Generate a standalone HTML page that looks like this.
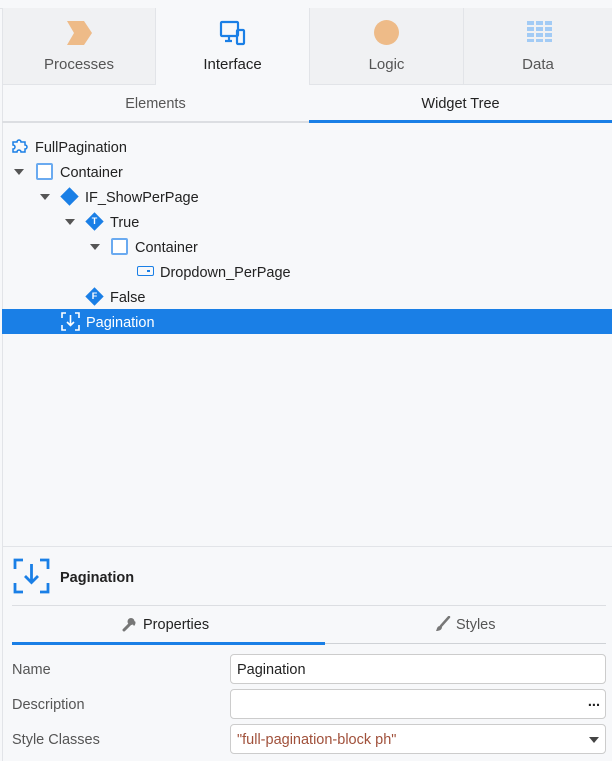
<!DOCTYPE html>
<html><head><style>
*{box-sizing:border-box;margin:0;padding:0}
body{width:612px;height:761px;background:#f7f8fa;font-family:"Liberation Sans","DejaVu Sans",sans-serif;position:relative;overflow:hidden;color:#222}
.a{position:absolute}
.tab{position:absolute;top:8px;height:76px;background:#f0f1f3;border-left:1px solid #e2e4e8;font-size:15px;color:#555;text-align:center}
.tab span{position:absolute;left:0;right:0;top:48px}
.row{position:absolute;height:25px;line-height:25px;font-size:14.5px;color:#222}
.row span{top:2px}
.tri{position:absolute;width:0;height:0;border-left:5px solid transparent;border-right:5px solid transparent;border-top:6px solid #555}
.sq{position:absolute;width:17px;height:17px;border:2px solid #6aaaf0;border-radius:2px;background:#fff}
.dia{position:absolute;width:13px;height:13px;background:#1a7fe6;transform:rotate(45deg)}
.lbl{position:absolute;font-size:14.5px;color:#555}
.inp{position:absolute;left:230px;width:376px;height:30px;background:#fff;border:1px solid #ccc;border-radius:4px;font-size:14.5px;line-height:30px;padding-left:6px}
</style></head><body>
<div class="a" style="left:0;top:8px;width:612px;height:1px;background:#e2e4e8"></div>
<div class="a" style="left:2px;top:8px;width:1px;height:753px;background:#e2e4e8"></div>
<div class="tab" style="left:2px;width:153px"><svg class="a" style="left:64px;top:13px" width="26" height="24"><polygon points="0,0 17,0 25,12 17,24 0,24 7,12" fill="#eebb88"/></svg><span>Processes</span></div>
<div class="tab" style="left:155px;width:154px;background:#f7f8fa;color:#222;height:77px"><svg class="a" style="left:63px;top:12px" width="28" height="26" fill="none" stroke="#1a7fe6" stroke-width="2.2"><rect x="2" y="2" width="17" height="14" rx="1"/><path d="M10 16v5M6 21h7"/><rect x="18" y="10" width="7" height="14" rx="1"/></svg><span>Interface</span></div>
<div class="tab" style="left:309px;width:154px"><div class="a" style="left:64px;top:12px;width:25px;height:25px;border-radius:50%;background:#eebb88"></div><span>Logic</span></div>
<div class="tab" style="left:463px;width:149px"><svg class="a" style="left:63px;top:13px" width="26" height="22" fill="#a2cbf5"><rect x="0" y="0" width="7" height="4"/><rect x="9" y="0" width="7" height="4"/><rect x="18" y="0" width="7" height="4"/><rect x="0" y="6" width="7" height="4"/><rect x="9" y="6" width="7" height="4"/><rect x="18" y="6" width="7" height="4"/><rect x="0" y="12" width="7" height="4"/><rect x="9" y="12" width="7" height="4"/><rect x="18" y="12" width="7" height="4"/><rect x="0" y="18" width="7" height="3"/><rect x="9" y="18" width="7" height="3"/><rect x="18" y="18" width="7" height="3"/></svg><span>Data</span></div>
<div class="a" style="left:2px;top:84px;width:153px;height:1px;background:#e2e4e8"></div>
<div class="a" style="left:309px;top:84px;width:303px;height:1px;background:#e2e4e8"></div>
<div class="a" style="left:2px;top:96px;width:307px;text-align:center;font-size:14.5px;color:#555">Elements</div>
<div class="a" style="left:309px;top:96px;width:303px;text-align:center;font-size:14.5px;color:#222">Widget Tree</div>
<div class="a" style="left:2px;top:121px;width:610px;height:2px;background:#dcdee2"></div>
<div class="a" style="left:309px;top:120px;width:303px;height:3px;background:#1a7fe6"></div>

<div class="row" style="left:0;top:134px;width:612px"><svg class="a" style="left:11px;top:5px" width="18" height="15" fill="none" stroke="#1a7fe6" stroke-width="1.5"><path d="M2 3h4a2 2 0 1 1 4 0h4v3a2 2 0 1 1 0 4v3h-4a2 2 0 1 0-4 0H2v-3a2 2 0 1 0 0-4z"/></svg><span class="a" style="left:35px">FullPagination</span></div>
<div class="row" style="left:0;top:159px;width:612px"><div class="tri" style="left:14px;top:10px"></div><div class="sq" style="left:36px;top:4px"></div><span class="a" style="left:60px">Container</span></div>
<div class="row" style="left:0;top:184px;width:612px"><div class="tri" style="left:40px;top:10px"></div><div class="dia" style="left:63px;top:6px"></div><span class="a" style="left:85px">IF_ShowPerPage</span></div>
<div class="row" style="left:0;top:209px;width:612px"><div class="tri" style="left:65px;top:10px"></div><div class="dia" style="left:88px;top:6px"></div><span class="a" style="left:88px;top:0;width:13px;text-align:center;color:#fff;font-size:9px;font-weight:bold">T</span><span class="a" style="left:110px">True</span></div>
<div class="row" style="left:0;top:234px;width:612px"><div class="tri" style="left:90px;top:10px"></div><div class="sq" style="left:111px;top:4px"></div><span class="a" style="left:135px">Container</span></div>
<div class="row" style="left:0;top:259px;width:612px"><div class="a" style="left:137px;top:7px;width:17px;height:10px;border:1.5px solid #1a7fe6;border-radius:2px"></div><div class="a" style="left:147px;top:11px;width:3px;height:2px;background:#1a7fe6"></div><span class="a" style="left:160px">Dropdown_PerPage</span></div>
<div class="row" style="left:0;top:284px;width:612px"><div class="dia" style="left:88px;top:6px"></div><span class="a" style="left:88px;top:0;width:13px;text-align:center;color:#fff;font-size:9px;font-weight:bold">F</span><span class="a" style="left:110px">False</span></div>
<div class="row" style="left:2px;top:309px;width:610px;background:#1a7fe6;color:#fff"><svg class="a" style="left:59px;top:3px" width="19" height="19" fill="none" stroke="#fff" stroke-width="1.6"><path d="M1 6V1h4M14 1h4v5M18 13v5h-4M5 18H1v-5M9.5 3v10M6 10l3.5 3.5L13 10"/></svg><span class="a" style="left:84px">Pagination</span></div>

<div class="a" style="left:2px;top:546px;width:610px;height:1px;background:#e2e4e8"></div>
<svg class="a" style="left:13px;top:558px" width="37" height="36" fill="none" stroke="#1a7fe6" stroke-width="2.8"><path d="M2 11V2h8M27 2h8v9M35 25v9h-8M10 34H2v-9M18.5 6v18M12 18l6.5 6.5L25 18"/></svg>
<div class="a" style="left:60px;top:570px;font-size:14.5px;font-weight:bold;color:#222">Pagination</div>
<div class="a" style="left:12px;top:605px;width:594px;height:1px;background:#dcdee2"></div>
<svg class="a" style="left:121px;top:616px" width="16" height="16"><path d="M3 14l6-6" stroke="#777" stroke-width="3" stroke-linecap="round"/><path d="M8 3a4 4 0 0 1 5 1l-3 3 1 1 3-3a4 4 0 0 1-1 5z" fill="#777"/><circle cx="10" cy="5.5" r="3.5" fill="#777"/></svg>
<div class="a" style="left:143px;top:617px;font-size:14.5px;color:#222">Properties</div>
<svg class="a" style="left:435px;top:616px" width="16" height="16"><path d="M14 1L6 10" stroke="#777" stroke-width="2.5" stroke-linecap="round"/><path d="M5 10c-3 0-3 3-4 5 3 0 6-1 6-4z" fill="#777"/></svg>
<div class="a" style="left:456px;top:617px;font-size:14.5px;color:#555">Styles</div>
<div class="a" style="left:12px;top:643px;width:594px;height:1px;background:#cfd2d6"></div>
<div class="a" style="left:12px;top:642px;width:313px;height:3px;background:#1a7fe6"></div>
<div class="lbl" style="left:12px;top:662px">Name</div>
<div class="inp" style="top:654px">Pagination</div>
<div class="lbl" style="left:12px;top:697px">Description</div>
<div class="inp" style="top:689px"><span class="a" style="right:5px;top:-3px;font-weight:bold">...</span></div>
<div class="lbl" style="left:12px;top:732px">Style Classes</div>
<div class="inp" style="top:724px;color:#a0503a">"full-pagination-block ph"<div class="tri" style="right:6px;top:12px;border-top-color:#444"></div></div>
</body></html>
